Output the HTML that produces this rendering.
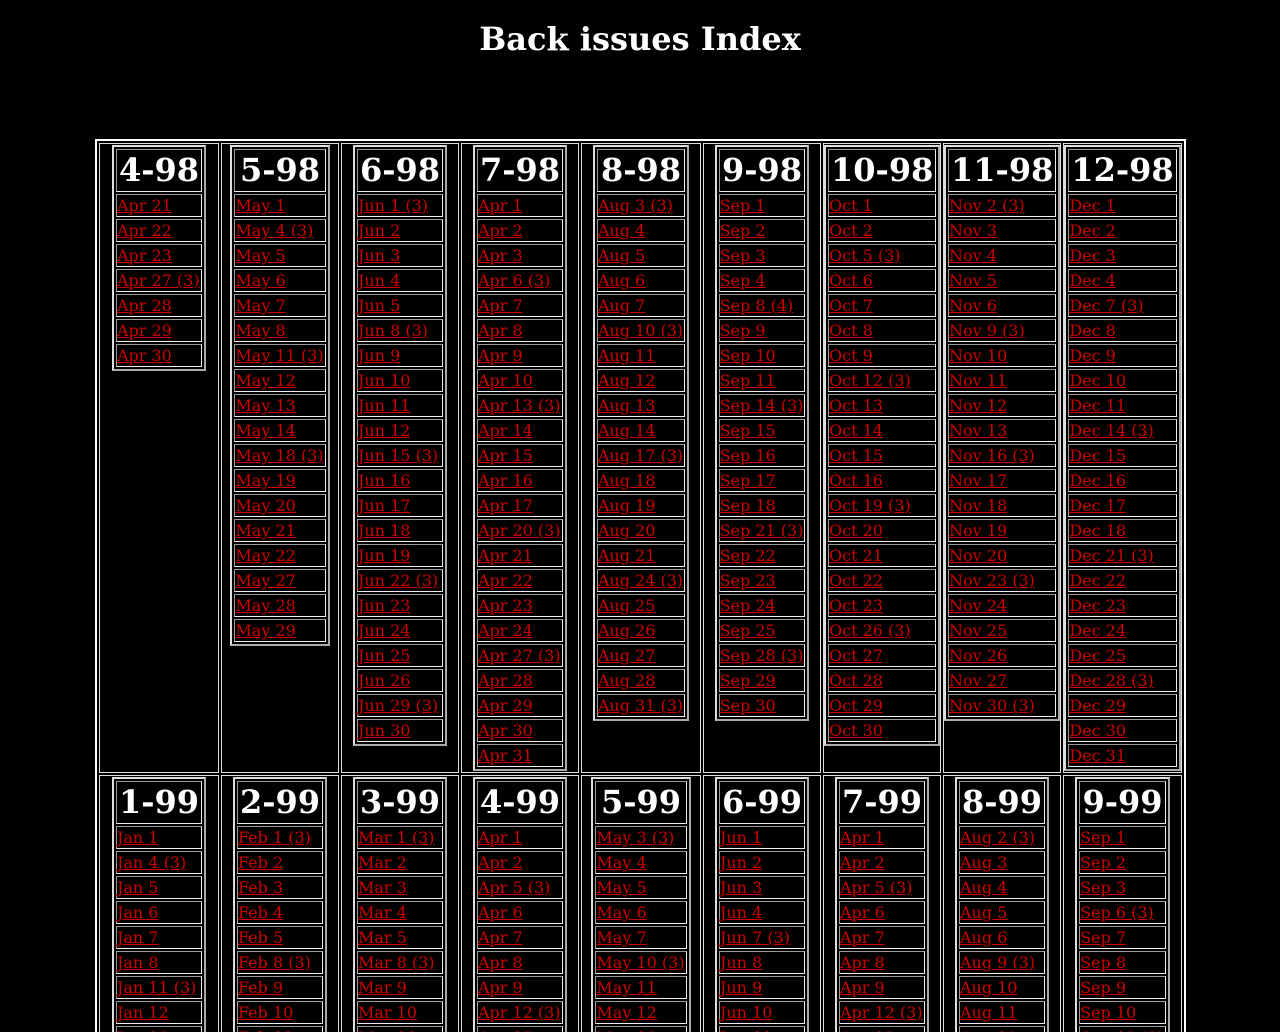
<!DOCTYPE html>
<html><head><meta charset="utf-8"><style>
html,body{height:1024px;overflow:hidden;}
body{margin:8px;background:#000;color:#fff;font-family:"DejaVu Serif","Liberation Serif",serif;}
h1{text-align:center;font-size:32px;margin:21px 0 0 0;line-height:37px;}
table.o{margin:81px auto 0 87px;border:2px solid #fff;border-spacing:2px;table-layout:fixed;width:1091px;}
td.o{border:1px solid #ddd;padding:1px 0;vertical-align:top;text-align:center;}
table.i{margin:0 auto;border:2px solid;border-color:#ddd #aaa #aaa #ddd;border-spacing:2px;}
table.i td{border:1px solid;border-color:#999 #eee #eee #999;padding:1px 1px 1px 0;text-align:left;font-size:16px;line-height:19px;white-space:nowrap;}
table.i th{border:1px solid;border-color:#999 #eee #eee #999;font-size:32px;font-weight:bold;padding:2px 2px;line-height:37px;white-space:nowrap;}
a{color:#c00;text-decoration:underline;}
</style></head><body>
<h1>Back issues Index</h1>
<table class="o">
<colgroup><col style="width:120px"><col style="width:118px"><col style="width:118px"><col style="width:118px"><col style="width:120px"><col style="width:118px"><col style="width:118px"><col style="width:118px"><col style="width:119px"></colgroup>
<tr>
<td class="o"><table class="i"><tr><th>4-98</th></tr>
<tr><td><a>Apr 21</a></td></tr><tr><td><a>Apr 22</a></td></tr><tr><td><a>Apr 23</a></td></tr><tr><td><a>Apr 27 (3)</a></td></tr><tr><td><a>Apr 28</a></td></tr><tr><td><a>Apr 29</a></td></tr><tr><td><a>Apr 30</a></td></tr></table></td>
<td class="o"><table class="i"><tr><th>5-98</th></tr>
<tr><td><a>May 1</a></td></tr><tr><td><a>May 4 (3)</a></td></tr><tr><td><a>May 5</a></td></tr><tr><td><a>May 6</a></td></tr><tr><td><a>May 7</a></td></tr><tr><td><a>May 8</a></td></tr><tr><td><a>May 11 (3)</a></td></tr><tr><td><a>May 12</a></td></tr><tr><td><a>May 13</a></td></tr><tr><td><a>May 14</a></td></tr><tr><td><a>May 18 (3)</a></td></tr><tr><td><a>May 19</a></td></tr><tr><td><a>May 20</a></td></tr><tr><td><a>May 21</a></td></tr><tr><td><a>May 22</a></td></tr><tr><td><a>May 27</a></td></tr><tr><td><a>May 28</a></td></tr><tr><td><a>May 29</a></td></tr></table></td>
<td class="o"><table class="i"><tr><th>6-98</th></tr>
<tr><td><a>Jun 1 (3)</a></td></tr><tr><td><a>Jun 2</a></td></tr><tr><td><a>Jun 3</a></td></tr><tr><td><a>Jun 4</a></td></tr><tr><td><a>Jun 5</a></td></tr><tr><td><a>Jun 8 (3)</a></td></tr><tr><td><a>Jun 9</a></td></tr><tr><td><a>Jun 10</a></td></tr><tr><td><a>Jun 11</a></td></tr><tr><td><a>Jun 12</a></td></tr><tr><td><a>Jun 15 (3)</a></td></tr><tr><td><a>Jun 16</a></td></tr><tr><td><a>Jun 17</a></td></tr><tr><td><a>Jun 18</a></td></tr><tr><td><a>Jun 19</a></td></tr><tr><td><a>Jun 22 (3)</a></td></tr><tr><td><a>Jun 23</a></td></tr><tr><td><a>Jun 24</a></td></tr><tr><td><a>Jun 25</a></td></tr><tr><td><a>Jun 26</a></td></tr><tr><td><a>Jun 29 (3)</a></td></tr><tr><td><a>Jun 30</a></td></tr></table></td>
<td class="o"><table class="i"><tr><th>7-98</th></tr>
<tr><td><a>Apr 1</a></td></tr><tr><td><a>Apr 2</a></td></tr><tr><td><a>Apr 3</a></td></tr><tr><td><a>Apr 6 (3)</a></td></tr><tr><td><a>Apr 7</a></td></tr><tr><td><a>Apr 8</a></td></tr><tr><td><a>Apr 9</a></td></tr><tr><td><a>Apr 10</a></td></tr><tr><td><a>Apr 13 (3)</a></td></tr><tr><td><a>Apr 14</a></td></tr><tr><td><a>Apr 15</a></td></tr><tr><td><a>Apr 16</a></td></tr><tr><td><a>Apr 17</a></td></tr><tr><td><a>Apr 20 (3)</a></td></tr><tr><td><a>Apr 21</a></td></tr><tr><td><a>Apr 22</a></td></tr><tr><td><a>Apr 23</a></td></tr><tr><td><a>Apr 24</a></td></tr><tr><td><a>Apr 27 (3)</a></td></tr><tr><td><a>Apr 28</a></td></tr><tr><td><a>Apr 29</a></td></tr><tr><td><a>Apr 30</a></td></tr><tr><td><a>Apr 31</a></td></tr></table></td>
<td class="o"><table class="i"><tr><th>8-98</th></tr>
<tr><td><a>Aug 3 (3)</a></td></tr><tr><td><a>Aug 4</a></td></tr><tr><td><a>Aug 5</a></td></tr><tr><td><a>Aug 6</a></td></tr><tr><td><a>Aug 7</a></td></tr><tr><td><a>Aug 10 (3)</a></td></tr><tr><td><a>Aug 11</a></td></tr><tr><td><a>Aug 12</a></td></tr><tr><td><a>Aug 13</a></td></tr><tr><td><a>Aug 14</a></td></tr><tr><td><a>Aug 17 (3)</a></td></tr><tr><td><a>Aug 18</a></td></tr><tr><td><a>Aug 19</a></td></tr><tr><td><a>Aug 20</a></td></tr><tr><td><a>Aug 21</a></td></tr><tr><td><a>Aug 24 (3)</a></td></tr><tr><td><a>Aug 25</a></td></tr><tr><td><a>Aug 26</a></td></tr><tr><td><a>Aug 27</a></td></tr><tr><td><a>Aug 28</a></td></tr><tr><td><a>Aug 31 (3)</a></td></tr></table></td>
<td class="o"><table class="i"><tr><th>9-98</th></tr>
<tr><td><a>Sep 1</a></td></tr><tr><td><a>Sep 2</a></td></tr><tr><td><a>Sep 3</a></td></tr><tr><td><a>Sep 4</a></td></tr><tr><td><a>Sep 8 (4)</a></td></tr><tr><td><a>Sep 9</a></td></tr><tr><td><a>Sep 10</a></td></tr><tr><td><a>Sep 11</a></td></tr><tr><td><a>Sep 14 (3)</a></td></tr><tr><td><a>Sep 15</a></td></tr><tr><td><a>Sep 16</a></td></tr><tr><td><a>Sep 17</a></td></tr><tr><td><a>Sep 18</a></td></tr><tr><td><a>Sep 21 (3)</a></td></tr><tr><td><a>Sep 22</a></td></tr><tr><td><a>Sep 23</a></td></tr><tr><td><a>Sep 24</a></td></tr><tr><td><a>Sep 25</a></td></tr><tr><td><a>Sep 28 (3)</a></td></tr><tr><td><a>Sep 29</a></td></tr><tr><td><a>Sep 30</a></td></tr></table></td>
<td class="o"><table class="i"><tr><th>10-98</th></tr>
<tr><td><a>Oct 1</a></td></tr><tr><td><a>Oct 2</a></td></tr><tr><td><a>Oct 5 (3)</a></td></tr><tr><td><a>Oct 6</a></td></tr><tr><td><a>Oct 7</a></td></tr><tr><td><a>Oct 8</a></td></tr><tr><td><a>Oct 9</a></td></tr><tr><td><a>Oct 12 (3)</a></td></tr><tr><td><a>Oct 13</a></td></tr><tr><td><a>Oct 14</a></td></tr><tr><td><a>Oct 15</a></td></tr><tr><td><a>Oct 16</a></td></tr><tr><td><a>Oct 19 (3)</a></td></tr><tr><td><a>Oct 20</a></td></tr><tr><td><a>Oct 21</a></td></tr><tr><td><a>Oct 22</a></td></tr><tr><td><a>Oct 23</a></td></tr><tr><td><a>Oct 26 (3)</a></td></tr><tr><td><a>Oct 27</a></td></tr><tr><td><a>Oct 28</a></td></tr><tr><td><a>Oct 29</a></td></tr><tr><td><a>Oct 30</a></td></tr></table></td>
<td class="o"><table class="i"><tr><th>11-98</th></tr>
<tr><td><a>Nov 2 (3)</a></td></tr><tr><td><a>Nov 3</a></td></tr><tr><td><a>Nov 4</a></td></tr><tr><td><a>Nov 5</a></td></tr><tr><td><a>Nov 6</a></td></tr><tr><td><a>Nov 9 (3)</a></td></tr><tr><td><a>Nov 10</a></td></tr><tr><td><a>Nov 11</a></td></tr><tr><td><a>Nov 12</a></td></tr><tr><td><a>Nov 13</a></td></tr><tr><td><a>Nov 16 (3)</a></td></tr><tr><td><a>Nov 17</a></td></tr><tr><td><a>Nov 18</a></td></tr><tr><td><a>Nov 19</a></td></tr><tr><td><a>Nov 20</a></td></tr><tr><td><a>Nov 23 (3)</a></td></tr><tr><td><a>Nov 24</a></td></tr><tr><td><a>Nov 25</a></td></tr><tr><td><a>Nov 26</a></td></tr><tr><td><a>Nov 27</a></td></tr><tr><td><a>Nov 30 (3)</a></td></tr></table></td>
<td class="o"><table class="i"><tr><th>12-98</th></tr>
<tr><td><a>Dec 1</a></td></tr><tr><td><a>Dec 2</a></td></tr><tr><td><a>Dec 3</a></td></tr><tr><td><a>Dec 4</a></td></tr><tr><td><a>Dec 7 (3)</a></td></tr><tr><td><a>Dec 8</a></td></tr><tr><td><a>Dec 9</a></td></tr><tr><td><a>Dec 10</a></td></tr><tr><td><a>Dec 11</a></td></tr><tr><td><a>Dec 14 (3)</a></td></tr><tr><td><a>Dec 15</a></td></tr><tr><td><a>Dec 16</a></td></tr><tr><td><a>Dec 17</a></td></tr><tr><td><a>Dec 18</a></td></tr><tr><td><a>Dec 21 (3)</a></td></tr><tr><td><a>Dec 22</a></td></tr><tr><td><a>Dec 23</a></td></tr><tr><td><a>Dec 24</a></td></tr><tr><td><a>Dec 25</a></td></tr><tr><td><a>Dec 28 (3)</a></td></tr><tr><td><a>Dec 29</a></td></tr><tr><td><a>Dec 30</a></td></tr><tr><td><a>Dec 31</a></td></tr></table></td>
</tr>
<tr>
<td class="o"><table class="i"><tr><th>1-99</th></tr>
<tr><td><a>Jan 1</a></td></tr><tr><td><a>Jan 4 (3)</a></td></tr><tr><td><a>Jan 5</a></td></tr><tr><td><a>Jan 6</a></td></tr><tr><td><a>Jan 7</a></td></tr><tr><td><a>Jan 8</a></td></tr><tr><td><a>Jan 11 (3)</a></td></tr><tr><td><a>Jan 12</a></td></tr><tr><td><a>Jan 13</a></td></tr></table></td>
<td class="o"><table class="i"><tr><th>2-99</th></tr>
<tr><td><a>Feb 1 (3)</a></td></tr><tr><td><a>Feb 2</a></td></tr><tr><td><a>Feb 3</a></td></tr><tr><td><a>Feb 4</a></td></tr><tr><td><a>Feb 5</a></td></tr><tr><td><a>Feb 8 (3)</a></td></tr><tr><td><a>Feb 9</a></td></tr><tr><td><a>Feb 10</a></td></tr><tr><td><a>Feb 11</a></td></tr></table></td>
<td class="o"><table class="i"><tr><th>3-99</th></tr>
<tr><td><a>Mar 1 (3)</a></td></tr><tr><td><a>Mar 2</a></td></tr><tr><td><a>Mar 3</a></td></tr><tr><td><a>Mar 4</a></td></tr><tr><td><a>Mar 5</a></td></tr><tr><td><a>Mar 8 (3)</a></td></tr><tr><td><a>Mar 9</a></td></tr><tr><td><a>Mar 10</a></td></tr><tr><td><a>Mar 11</a></td></tr></table></td>
<td class="o"><table class="i"><tr><th>4-99</th></tr>
<tr><td><a>Apr 1</a></td></tr><tr><td><a>Apr 2</a></td></tr><tr><td><a>Apr 5 (3)</a></td></tr><tr><td><a>Apr 6</a></td></tr><tr><td><a>Apr 7</a></td></tr><tr><td><a>Apr 8</a></td></tr><tr><td><a>Apr 9</a></td></tr><tr><td><a>Apr 12 (3)</a></td></tr><tr><td><a>Apr 13</a></td></tr></table></td>
<td class="o"><table class="i"><tr><th>5-99</th></tr>
<tr><td><a>May 3 (3)</a></td></tr><tr><td><a>May 4</a></td></tr><tr><td><a>May 5</a></td></tr><tr><td><a>May 6</a></td></tr><tr><td><a>May 7</a></td></tr><tr><td><a>May 10 (3)</a></td></tr><tr><td><a>May 11</a></td></tr><tr><td><a>May 12</a></td></tr><tr><td><a>May 13</a></td></tr></table></td>
<td class="o"><table class="i"><tr><th>6-99</th></tr>
<tr><td><a>Jun 1</a></td></tr><tr><td><a>Jun 2</a></td></tr><tr><td><a>Jun 3</a></td></tr><tr><td><a>Jun 4</a></td></tr><tr><td><a>Jun 7 (3)</a></td></tr><tr><td><a>Jun 8</a></td></tr><tr><td><a>Jun 9</a></td></tr><tr><td><a>Jun 10</a></td></tr><tr><td><a>Jun 11</a></td></tr></table></td>
<td class="o"><table class="i"><tr><th>7-99</th></tr>
<tr><td><a>Apr 1</a></td></tr><tr><td><a>Apr 2</a></td></tr><tr><td><a>Apr 5 (3)</a></td></tr><tr><td><a>Apr 6</a></td></tr><tr><td><a>Apr 7</a></td></tr><tr><td><a>Apr 8</a></td></tr><tr><td><a>Apr 9</a></td></tr><tr><td><a>Apr 12 (3)</a></td></tr><tr><td><a>Apr 13</a></td></tr></table></td>
<td class="o"><table class="i"><tr><th>8-99</th></tr>
<tr><td><a>Aug 2 (3)</a></td></tr><tr><td><a>Aug 3</a></td></tr><tr><td><a>Aug 4</a></td></tr><tr><td><a>Aug 5</a></td></tr><tr><td><a>Aug 6</a></td></tr><tr><td><a>Aug 9 (3)</a></td></tr><tr><td><a>Aug 10</a></td></tr><tr><td><a>Aug 11</a></td></tr><tr><td><a>Aug 12</a></td></tr></table></td>
<td class="o"><table class="i"><tr><th>9-99</th></tr>
<tr><td><a>Sep 1</a></td></tr><tr><td><a>Sep 2</a></td></tr><tr><td><a>Sep 3</a></td></tr><tr><td><a>Sep 6 (3)</a></td></tr><tr><td><a>Sep 7</a></td></tr><tr><td><a>Sep 8</a></td></tr><tr><td><a>Sep 9</a></td></tr><tr><td><a>Sep 10</a></td></tr><tr><td><a>Sep 13 (3)</a></td></tr></table></td>
</tr>
</table>
</body></html>
